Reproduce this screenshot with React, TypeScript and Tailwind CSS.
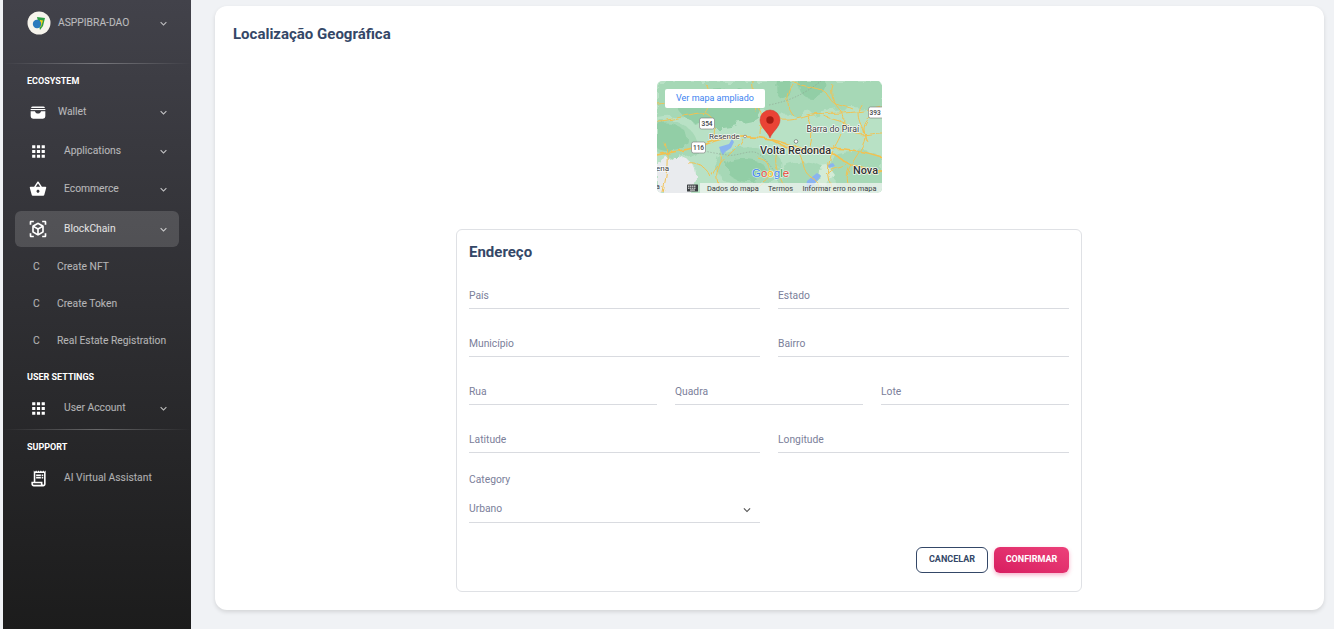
import type { ReactNode } from 'react'
import {
  MdApps,
  MdKeyboardArrowDown,
  MdOutlineReceiptLong,
  MdShoppingBasket,
  MdViewInAr,
} from 'react-icons/md'

function Chevron({ className = '' }: { className?: string }) {
  return <MdKeyboardArrowDown size={13} className={className} />
}

function WalletIcon() {
  return (
    <svg width="16" height="13" viewBox="0 0 17 14" fill="none">
      <path d="M3 0.5h11a2 2 0 0 1 2 1.6H1a2 2 0 0 1 2-1.6z" fill="#fff" />
      <path d="M0.6 3.2h15.8v1.2H0.6z" fill="#fff" />
      <path
        d="M0.6 5.6h4.6c.5 1.7 1.7 2.6 3.3 2.6s2.8-.9 3.3-2.6h4.6V11a2.6 2.6 0 0 1-2.6 2.6H3.2A2.6 2.6 0 0 1 .6 11z"
        fill="#fff"
      />
    </svg>
  )
}

function NavRow({
  icon,
  label,
  labelClass,
  chevron = true,
  className = '',
}: {
  icon: ReactNode
  label: string
  labelClass: string
  chevron?: boolean
  className?: string
}) {
  return (
    <div className={`flex items-center pl-[23px] pr-[21px] text-white/65 ${className}`}>
      <div className="flex w-[24px] shrink-0 items-center justify-center text-white">{icon}</div>
      <span className={labelClass}>{label}</span>
      {chevron && <Chevron className="ml-auto text-white/70" />}
    </div>
  )
}

function SubRow({ label }: { label: string }) {
  return (
    <div className="flex h-[37px] items-center pl-[30px] text-white/65">
      <span className="w-[24px]">C</span>
      <span>{label}</span>
    </div>
  )
}

function SectionTitle({ children, className = '' }: { children: string; className?: string }) {
  return (
    <div className={`flex h-[14px] items-center pl-[24px] text-[9px] font-bold text-white ${className}`}>
      {children}
    </div>
  )
}

function Divider({ className = '' }: { className?: string }) {
  return (
    <div className={`h-px bg-gradient-to-r from-transparent via-white/30 to-transparent ${className}`} />
  )
}

function Field({ label, className = '' }: { label: string; className?: string }) {
  return (
    <div className={`flex h-[28px] items-center border-b border-[#d9dbe0] pt-[2px] text-[10.3px] text-[#7b809a] ${className}`}>
      {label}
    </div>
  )
}

function MapPreview() {
  return (
    <div className="relative h-[112px] w-[225px] overflow-hidden rounded-[5px]">
      <svg width="225" height="112" viewBox="0 0 225 112" className="block">
        <defs>
          <filter id="rough" x="-10%" y="-10%" width="120%" height="120%">
            <feTurbulence type="fractalNoise" baseFrequency="0.09" numOctaves="3" seed="4" />
            <feDisplacementMap in="SourceGraphic" scale="11" />
            <feGaussianBlur stdDeviation="0.5" />
          </filter>
          <filter id="wiggle" x="-5%" y="-5%" width="110%" height="110%">
            <feTurbulence type="fractalNoise" baseFrequency="0.12" numOctaves="2" seed="9" />
            <feDisplacementMap in="SourceGraphic" scale="5" />
          </filter>
        </defs>
        <rect width="225" height="112" fill="#b8e1c5" />
        <g filter="url(#rough)">
          <g fill="#a6d8b6">
            <path d="M0 0h225v26c-20 6-40-2-60 4s-40 6-54 2-30 4-50 6-40-6-61-2z" />
            <path d="M0 40c18-4 36 6 40 20s-10 18-22 16-18-2-18-8z" />
            <path d="M66 70c20-6 44-4 54 4s2 24-12 30-42 2-46-10 0-20 4-24z" />
            <path d="M128 84c14-6 32-4 40 4s-2 24-20 24h-22c-8-10-6-22 2-28z" />
            <path d="M180 72c14-4 34-2 45 4v36h-40c-10-14-14-32-5-40z" />
          </g>
          <g fill="#92cea6">
            <path d="M24 18c16-12 50-14 66-8s18 16 14 24-16 6-28 10-30 2-42-4-16-16-10-22z" />
            <path d="M0 44c12-4 26 0 30 10s-6 16-16 16-14-2-14-4z" />
            <path d="M74 80c12-4 30-2 34 6s-6 14-18 14-20-6-20-12 0-6 4-8z" />
            <path d="M144 0h24c2 8-4 16-14 16s-14-8-10-16z" />
            <path d="M120 0h14c2 10-2 18-8 18s-8-10-6-18z" />
          </g>
          <path d="M8 78c10-4 22-2 28 6s2 28-4 28H0V84z" fill="#e9ebee" />
          <path d="M160 88l12-2 6 8-8 12-12-2z" fill="#d3ebd6" />
        </g>
        <g fill="#8ab4f0">
          <path d="M62 66l10-3 3-5 2 3-3 6-6 4-2 3-2-3z" />
          <path d="M150 100l10-8 4 3-8 10-8 6z" />
          <path d="M170 84l6-2 2 3-6 2z" />
        </g>
        <g fill="none" stroke="#f3c150" strokeWidth="1" filter="url(#wiggle)">
          <path d="M0 74C20 70 38 68 52 62s40-8 60-4 30 12 48 10 40 0 65 8" strokeWidth="1.7" />
          <path d="M113 58c14 8 28 14 46 12s24 10 36 14 20 6 30 6" strokeWidth="1.7" />
          <path d="M0 40c14 0 28-6 42-8s18 12 14 28" />
          <path d="M50 4c6 10 2 24-4 30" />
          <path d="M112 36c14 4 26 2 38-2s38 2 75-8" />
          <path d="M136 34c-8-10-6-22 2-34" />
          <path d="M150 34c6 12 6 24 2 34" />
          <path d="M176 4c-4 10 2 20 8 26s2 24-8 38" />
          <path d="M205 22c-8 10-2 20 2 28s-4 20-12 32-4 20-2 30" />
          <path d="M86 58c-6 12-24 20-32 38" />
          <path d="M120 72c-4 12 2 26 12 40" />
          <path d="M176 70c-6 12-6 26 0 42" />
          <path d="M60 18c14-2 30 0 40 8s4 18 4 28" />
          <path d="M8 62c4 12 2 30-2 50" />
          <path d="M30 82c12-2 20 6 24 14" />
          <path d="M210 60c-6-12-4-24 15-28" />
          <path d="M138 2c16 6 30 4 34 14s16 8 24 12" />
          <path d="M166 34c8 6 22 4 28 14s18 4 31 4" />
          <path d="M140 70c8 8 4 20 14 26s6 10 4 16" />
          <path d="M190 84c-8 4-14 2-20 10" />
          <path d="M96 0c-2 10 6 18 2 30" />
          <path d="M0 22c10-2 16 4 26 2s16-10 24-8" />
          <path d="M100 76c10 2 14 10 12 18s-12 6-14 18" />
          <path d="M64 74c2 10-6 14-4 24s4 10 2 14" />
          <path d="M204 92c8-2 14 2 21-2" />
        </g>
        <path d="M36 66c14 6 24 6 34 8s22-6 30-2 14 14 20 22" fill="none" stroke="#8a9a8c" strokeWidth="0.5" strokeDasharray="1.5 1.5" />
        <path d="M112 24C132 20 146 14 164 0" fill="none" stroke="#8a9a8c" strokeWidth="0.5" strokeDasharray="1.5 1.5" />

        <g fontFamily="Roboto, sans-serif" fill="#3c4043">
          <rect x="42.5" y="37" width="15" height="11" rx="2" fill="#fff" stroke="#777" strokeWidth="0.6" />
          <text x="50" y="45" textAnchor="middle" fontSize="6.5" fontWeight="500">354</text>
          <rect x="34.5" y="61" width="14" height="11" rx="2" fill="#fff" stroke="#777" strokeWidth="0.6" />
          <text x="41.5" y="69" textAnchor="middle" fontSize="6.5" fontWeight="500">116</text>
          <rect x="211.5" y="26" width="15" height="11" rx="2" fill="#fff" stroke="#777" strokeWidth="0.6" />
          <text x="212.5" y="34" fontSize="6.5" fontWeight="500">393</text>
          <circle cx="88" cy="55.5" r="1.3" fill="#fff" stroke="#555" strokeWidth="0.5" />
          <circle cx="139" cy="60.5" r="1.8" fill="#fff" stroke="#555" strokeWidth="0.6" />
          <g stroke="#fff" strokeOpacity="0.85" strokeWidth="1.6" paintOrder="stroke" strokeLinejoin="round">
            <text x="52" y="57.5" fontSize="8">Resende</text>
            <text x="149.5" y="51" fontSize="8.8">Barra do Piraí</text>
            <text x="103" y="73" fontSize="10.9" fontWeight="500" fill="#2f3336">Volta Redonda</text>
            <text x="196" y="93" fontSize="10.9" fontWeight="500" fill="#2f3336">Nova</text>
            <text x="-1" y="90" fontSize="8">ena</text>
          </g>
          <text x="-1" y="108" fontSize="7">a</text>
        </g>
        <text x="95" y="96" fontFamily="'Liberation Sans', sans-serif" fontSize="11.5" stroke="#fff" strokeOpacity="0.7" strokeWidth="1.2" paintOrder="stroke">
          <tspan fill="#4285f4">G</tspan>
          <tspan fill="#ea4335">o</tspan>
          <tspan fill="#fbbc05">o</tspan>
          <tspan fill="#4285f4">g</tspan>
          <tspan fill="#34a853">l</tspan>
          <tspan fill="#ea4335">e</tspan>
        </text>

        <path d="M113 57c-2-6-10-11-10-18a10 10 0 0 1 20 0c0 7-8 12-10 18z" fill="#ea4335" stroke="#d33426" strokeWidth="0.5" />
        <circle cx="113" cy="39" r="3.7" fill="#a61b12" />

        <rect x="43" y="102" width="182" height="10" fill="#f4f5f4" fillOpacity="0.72" />
        <rect x="30" y="103.5" width="11" height="7" rx="0.6" fill="#3c4043" />
        <g fill="#fff">
          <rect x="31.2" y="104.6" width="1.2" height="1.2" />
          <rect x="33.2" y="104.6" width="1.2" height="1.2" />
          <rect x="35.2" y="104.6" width="1.2" height="1.2" />
          <rect x="37.2" y="104.6" width="1.2" height="1.2" />
          <rect x="31.2" y="106.6" width="1.2" height="1.2" />
          <rect x="33.2" y="106.6" width="1.2" height="1.2" />
          <rect x="35.2" y="106.6" width="1.2" height="1.2" />
          <rect x="37.2" y="106.6" width="1.2" height="1.2" />
          <rect x="33" y="108.6" width="5" height="0.9" />
        </g>
        <g fontFamily="Roboto, sans-serif" fontSize="7.4" fill="#3c4043">
          <text x="50" y="109.5">Dados do mapa</text>
          <text x="111" y="109.5">Termos</text>
          <text x="145.5" y="109.5">Informar erro no mapa</text>
        </g>
      </svg>
      <div className="absolute left-[8px] top-[8px] flex h-[19px] w-[100px] items-center justify-center rounded-[2px] bg-white text-[9px] text-[#3b82f0]">
        Ver mapa ampliado
      </div>
    </div>
  )
}

export default function App() {
  return (
    <div className="flex h-[629px] w-[1334px] overflow-hidden bg-[#f0f2f5] font-['Roboto',sans-serif]">
      {/* Sidebar */}
      <aside className="ml-[3px] h-full w-[188px] shrink-0 bg-gradient-to-b from-[#42424a] to-[#1c1c1c] text-[10.3px]">
        <div className="flex h-[46px] items-center pl-[24px] pr-[21px] text-white/65">
          <svg width="24" height="24" viewBox="0 0 24 24" className="shrink-0">
            <circle cx="12" cy="12" r="11.5" fill="#f6f4ec" />
            <path d="M10 6l8 1-2 8-3 4z" fill="#2f9e44" />
            <path d="M13 9l3 .5-2 6.5-2-1z" fill="#f2d21d" />
            <circle cx="10" cy="13" r="4.2" fill="#2b7bbd" />
          </svg>
          <span className="ml-[7px]">ASPPIBRA-DAO</span>
          <Chevron className="ml-auto" />
        </div>
        <Divider className="mt-[17px]" />
        <SectionTitle className="mt-[11px]">ECOSYSTEM</SectionTitle>
        <NavRow className="mt-[4px] h-[38px]" icon={<WalletIcon />} label="Wallet" labelClass="ml-[8px]" />
        <NavRow className="mt-px h-[38px]" icon={<MdApps size={19} />} label="Applications" labelClass="ml-[14px]" />
        <NavRow className="h-[38px]" icon={<MdShoppingBasket size={18} />} label="Ecommerce" labelClass="ml-[14px]" />
        <div className="mx-[12px] mt-[3px] flex h-[36px] items-center rounded-[6px] bg-white/15 pl-[11px] pr-[9px] text-white/85">
          <div className="flex w-[24px] shrink-0 items-center justify-center text-white">
            <MdViewInAr size={20} />
          </div>
          <span className="ml-[14px]">BlockChain</span>
          <Chevron className="ml-auto text-white/70" />
        </div>
        <div className="mt-px">
          <SubRow label="Create NFT" />
          <SubRow label="Create Token" />
          <SubRow label="Real Estate Registration" />
        </div>
        <SectionTitle className="mt-[12px]">USER SETTINGS</SectionTitle>
        <NavRow className="mt-[4px] h-[38px]" icon={<MdApps size={19} />} label="User Account" labelClass="ml-[14px]" />
        <Divider className="mt-[2px]" />
        <SectionTitle className="mt-[11px]">SUPPORT</SectionTitle>
        <NavRow
          className="mt-[4px] h-[38px]"
          chevron={false}
          icon={<MdOutlineReceiptLong size={19} />}
          label="AI Virtual Assistant"
          labelClass="ml-[14px]"
        />
      </aside>

      {/* Main card */}
      <main className="ml-[24px] mt-[6px] h-[604px] w-[1109px] rounded-[12px] bg-white px-[18px] pt-[18px] shadow-[0_2px_4px_rgba(0,0,0,0.12)]">
        <h1 className="text-[15px] leading-[20px] font-bold text-[#344767]">Localização Geográfica</h1>
        <div className="mt-[37px] flex justify-center">
          <MapPreview />
        </div>
        <section className="ml-[223px] mt-[36px] h-[363px] w-[626px] rounded-[6px] border border-[#dfe1e5] px-[12px] pt-[12px]">
          <h2 className="text-[15px] leading-[20px] font-bold text-[#344767]">Endereço</h2>
          <div className="mt-[19px] grid grid-cols-2 gap-x-[18px] gap-y-[20px]">
            <Field label="País" />
            <Field label="Estado" />
            <Field label="Município" />
            <Field label="Bairro" />
          </div>
          <div className="mt-[20px] grid grid-cols-3 gap-x-[18px]">
            <Field label="Rua" />
            <Field label="Quadra" />
            <Field label="Lote" />
          </div>
          <div className="mt-[20px] grid grid-cols-2 gap-x-[18px]">
            <Field label="Latitude" />
            <Field label="Longitude" />
          </div>
          <div className="mt-[20px] grid grid-cols-2 gap-x-[18px]">
            <div>
              <div className="h-[14px] text-[10.3px] leading-[14px] text-[#7b809a]">Category</div>
              <div className="mt-[7px] flex h-[29px] items-center justify-between border-b border-[#d9dbe0] pt-[2px] pr-[6px] text-[10.3px] text-[#7b809a]">
                <span>Urbano</span>
                <MdKeyboardArrowDown size={14} className="translate-y-px text-[#555]" />
              </div>
            </div>
          </div>
          <div className="mt-[24px] flex justify-end gap-[6px]">
            <button
              type="button"
              className="h-[26px] w-[72px] rounded-[6px] border border-[#344767] bg-white text-[9px] font-bold text-[#344767]"
            >
              CANCELAR
            </button>
            <button
              type="button"
              className="h-[26px] w-[75px] rounded-[6px] bg-gradient-to-tr from-[#d81b60] to-[#ec407a] text-[9px] font-bold text-white shadow-[0_2px_4px_rgba(233,30,99,0.35)]"
            >
              CONFIRMAR
            </button>
          </div>
        </section>
      </main>
    </div>
  )
}
